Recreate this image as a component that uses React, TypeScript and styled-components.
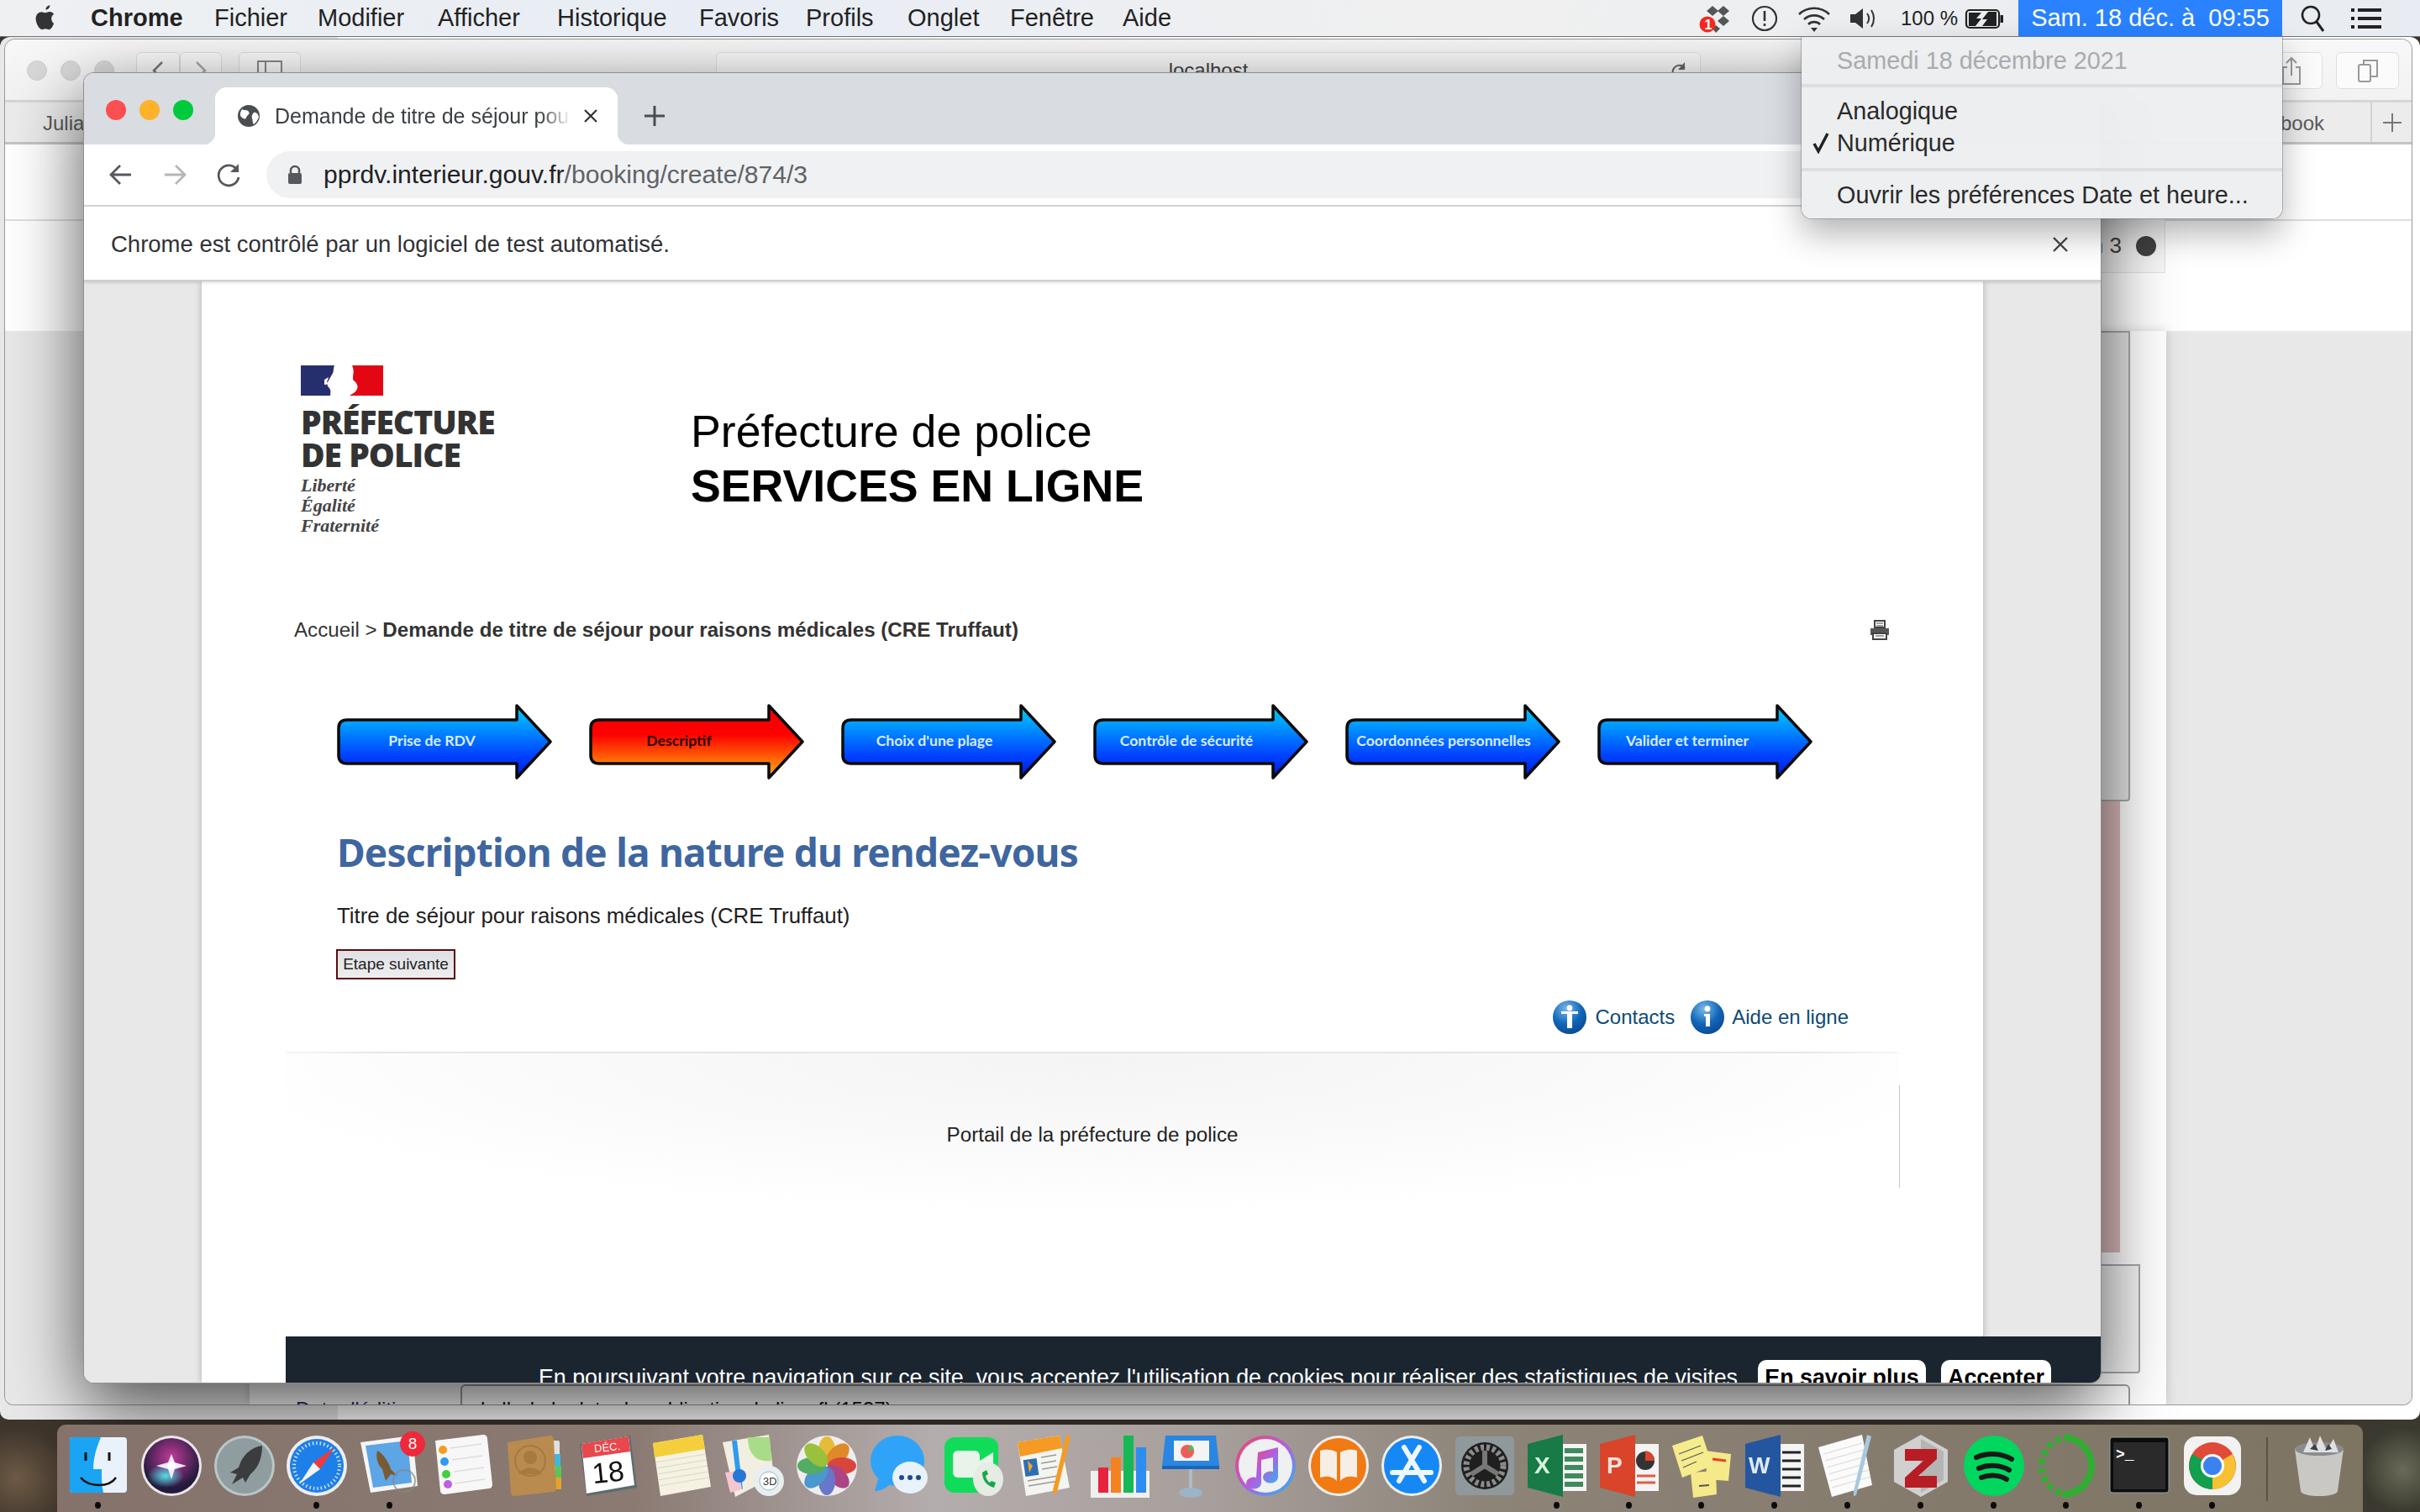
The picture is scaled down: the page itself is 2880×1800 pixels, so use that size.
import React from 'react';
import styled, { createGlobalStyle } from 'styled-components';

const Global = createGlobalStyle`
  html, body { margin: 0; padding: 0; background: #2c2a26; }
  * { box-sizing: border-box; }
  body { font-family: "Liberation Sans", Arial, sans-serif; }
`;

const Screen = styled.div`
  position: relative; width: 2880px; height: 1800px; overflow: hidden;
  background:
    radial-gradient(circle at 20px 1760px, #6e5a45 0, #3f362c 60px, transparent 90px),
    radial-gradient(circle at 2860px 1750px, #6a6a58 0, #3b3a30 50px, transparent 90px),
    #3a352c;
`;

/* ---------- menu bar ---------- */
const MenuBar = styled.header`
  position: relative; z-index: 5; height: 44px; display: flex; align-items: center;
  background: linear-gradient(90deg, #eef0f2, #e8edf5 30%, #f0f0f0 60%, #e8ecf2);
  border-bottom: 1px solid #6f7378; font-size: 29px; color: #222; padding-left: 40px;
`;
const AppleMark = styled.svg` width: 28px; height: 32px; margin-right: 40px; margin-top: -2px; flex: none; `;
const MenuLabel = styled.span<{ $w: number; $bold?: boolean }>`
  width: ${p => p.$w}px; white-space: nowrap; font-weight: ${p => (p.$bold ? 700 : 400)};
`;
const MenuSpacer = styled.div` flex: 1; `;
const StatusIcon = styled.svg<{ $w: number; $gap: number }>`
  width: ${p => p.$w}px; height: 36px; margin-right: ${p => p.$gap}px; flex: none;
`;
const StatusText = styled.span<{ $gap: number }>` font-size: 24px; margin-right: ${p => p.$gap}px; white-space: nowrap; `;
const Clock = styled.div`
  width: 314px; height: 44px; background: #2a82ff; color: #fff; font-size: 29px; white-space: pre; flex: none;
  display: flex; align-items: center; justify-content: center; margin-right: 21px;
`;

/* ---------- drop-down ---------- */
const DropMenu = styled.div`
  position: absolute; z-index: 6; left: 2144px; top: 44px; width: 572px; height: 216px;
  background: rgba(236,238,241,.97); border-radius: 0 0 12px 12px;
  box-shadow: 0 0 0 1px rgba(120,120,120,.5), 0 18px 40px rgba(0,0,0,.3);
  display: flex; flex-direction: column; font-size: 28.8px; color: #2a2a2a; padding-left: 42px;
`;
const DropItem = styled.div<{ $off?: boolean; $h: number }>`
  height: ${p => p.$h}px; line-height: ${p => p.$h}px; position: relative; white-space: nowrap;
  color: ${p => (p.$off ? '#a9abae' : '#2a2a2a')};
`;
const DropGroup = styled.div` padding: 9px 0 11px; `;
const DropRule = styled.div` height: 4px; background: #dcdee1; margin-left: -42px; flex: none; `;
const Check = styled.svg` position: absolute; left: -30px; top: 6px; width: 22px; height: 26px; `;

/* ---------- windows behind ---------- */
const OuterWindow = styled.section`
  position: absolute; left: 0; top: 44px; width: 2880px; height: 1646px; border-radius: 12px 12px 10px 10px; overflow: hidden;
  background: linear-gradient(90deg, #e8e8e8 402px, #fff 402px);
`;
const BackWindow = styled.section`
  position: absolute; left: 6px; top: 3px; width: 2864px; height: 1625px;
  border-radius: 12px 12px 10px 10px; overflow: hidden; background: #f6f6f6;
  display: flex; flex-direction: column; box-shadow: 0 0 0 1px #9a9a9a;
`;
const BackTitle = styled.div`
  height: 75px; flex: none; display: flex; align-items: center; padding: 2px 16px 0 26px;
  background: linear-gradient(#f8f8f8, #f2f2f2); border-bottom: 3px solid #d6d6d6; gap: 16px;
`;
const GhostDot = styled.i` width: 24px; height: 24px; border-radius: 50%; background: #d8d8d8; border: 1px solid #cfcfcf; flex: none; `;
const GhostBtn = styled.div<{ $w: number; $ml?: number }>`
  width: ${p => p.$w}px; height: 44px; border: 1px solid #dedede; border-radius: 6px; background: #fbfbfb;
  margin-left: ${p => p.$ml ?? 0}px; display: flex; align-items: center; justify-content: center; flex: none;
`;
const GhostAddress = styled.div`
  flex: none; width: 1172px; height: 44px; margin-left: 478px; border: 1px solid #e2e2e2; border-radius: 6px; background: #fbfbfb;
  display: flex; justify-content: center; align-items: center; font-size: 24px; color: #444; position: relative;
`;
const GhostReload = styled.svg` position: absolute; right: 14px; top: 8px; width: 22px; height: 26px; `;
const BackTabs = styled.div`
  height: 50px; flex: none; display: flex; align-items: center; background: #ececec; border-bottom: 3px solid #c4c4c4;
  font-size: 24px; color: #5a5a5a; padding-left: 45px;
`;
const BackTabEnd = styled.div`
  width: 49px; height: 100%; border-left: 2px solid #d2d2d2; display: flex; align-items: center; justify-content: center;
`;
const BackTabName = styled.span` margin-left: auto; margin-right: 55px; padding-top: 2px; `;
const BackTabFirst = styled.span` padding-top: 2px; `;
const BackWhite = styled.div` height: 222px; flex: none; background: #fff; position: relative; `;
const BackRule = styled.div` height: 2px; margin-top: 89px; background: #dedede; `;
const Pill = styled.div`
  position: absolute; left: 2300px; top: 0; width: 271px; height: 153px; background: #f7f7f7; border: 1px solid #e2e2e2; border-top: 0;
  display: flex; align-items: center; justify-content: flex-end; gap: 17px; padding: 89px 10px 0 0; font-size: 26px; color: #444; white-space: nowrap;
`;
const PillDot = styled.i` width: 24px; height: 24px; border-radius: 50%; background: #444; `;
const BackBody = styled.div` flex: 1; background: #e8e8e8; position: relative; `;
const BackColumn = styled.div`
  position: absolute; left: 291px; right: 292px; top: 0; bottom: 0; background: #fff; box-shadow: 0 0 12px rgba(0,0,0,.16);
`;
const BackCard = styled.div<{ $t: number; $h: number; $r: number; $fill: string }>`
  position: absolute; top: ${p => p.$t}px; height: ${p => p.$h}px; left: 2100px; right: ${p => p.$r}px;
  border: 2px solid #a8a8a8; border-left: 0; border-radius: 0 0 4px 0; background: ${p => p.$fill};
`;
const BackPink = styled.div`
  position: absolute; top: 560px; height: 537px; left: 2100px; right: 347px; background: #ddbabd;
`;
const BackLetter = styled.span<{ $t: number }>`
  position: absolute; left: 2482px; top: ${p => p.$t}px; font-family: "Liberation Serif", serif; font-weight: 700; font-size: 24px; color: #111; line-height: 1;
`;
const BackTick = styled.i` position: absolute; left: 2490px; top: 81px; width: 5px; height: 5px; background: #a01030; `;
const BackLowBox = styled.div`
  position: absolute; left: 542px; right: 335px; top: 1254px; bottom: -4px; border: 2px solid #9c9c9c; border-radius: 6px 6px 0 0;
  padding: 14px 0 0 22px; font-size: 24px; line-height: 28px; color: #111; white-space: nowrap;
`;
const BackLowLabel = styled.span`
  position: absolute; left: 346px; top: 1270px; font-size: 24px; line-height: 28px; color: #22296e; white-space: nowrap;
`;

/* ---------- front (Chrome) window ---------- */
const ChromeWindow = styled.section`
  position: absolute; z-index: 2; left: 100px; top: 87px; width: 2400px; height: 1559px;
  border-radius: 12px; overflow: hidden; display: flex; flex-direction: column; background: #fff;
`;
const ChromeShadow = styled.div`
  position: absolute; z-index: 1; left: 100px; top: 87px; width: 2400px; height: 1559px; border-radius: 12px;
  box-shadow: 0 0 0 1px #8f8f8f, 0 28px 86px rgba(0,0,0,.68);
`;
const TabStrip = styled.div`
  position: relative; height: 85px; flex: none; background: #d9dce1; display: flex; align-items: flex-end; padding-left: 156px;
`;
const Lights = styled.div` position: absolute; left: 26px; top: 32px; display: flex; gap: 16px; `;
const Light = styled.i<{ $c: string }>` width: 24px; height: 24px; border-radius: 50%; background: ${p => p.$c}; `;
const Tab = styled.div`
  width: 479px; height: 68px; background: #fff; border-radius: 14px 14px 0 0; display: flex; align-items: center; padding-left: 26px; position: relative;
  &::before, &::after { content: ''; position: absolute; bottom: 0; width: 14px; height: 14px; }
  &::before { left: -14px; background: radial-gradient(circle at 0 0, transparent 14px, #fff 14.5px); }
  &::after { right: -14px; background: radial-gradient(circle at 100% 0, transparent 14px, #fff 14.5px); }
`;
const TabTitle = styled.span`
  margin-left: 17px; width: 352px; font-size: 25px; color: #3c4043; white-space: nowrap; overflow: hidden;
  -webkit-mask-image: linear-gradient(90deg, #000 90%, transparent);
  mask-image: linear-gradient(90deg, #000 90%, transparent);
`;
const TabClose = styled.svg` width: 18px; height: 18px; margin-left: 15px; `;
const NewTab = styled.svg` width: 26px; height: 26px; margin: 0 0 21px 31px; `;
const Toolbar = styled.div`
  height: 74px; flex: none; display: flex; align-items: center; border-bottom: 2px solid #d9d9d9; padding-left: 28px;
`;
const NavIcon = styled.svg<{ $gap: number }>` width: 32px; height: 32px; margin-right: ${p => p.$gap}px; flex: none; `;
const Omnibox = styled.div`
  margin-left: 29px; flex: 1; margin-right: 20px; height: 56px; background: #f0f1f3; border-radius: 28px; display: flex; align-items: center; padding-left: 25px;
  font-size: 30.1px; color: #5f6368;
`;
const Host = styled.span` color: #202124; margin-left: 25px; `;
const InfoBar = styled.div`
  height: 89px; flex: none; display: flex; align-items: center; justify-content: space-between; padding: 2px 38px 0 32px; font-size: 27.5px; color: #303236;
  border-bottom: 2px solid #cfcfcf; box-shadow: 0 1px 4px rgba(0,0,0,.18); position: relative; z-index: 1; background: #fff;
`;
const InfoClose = styled.svg` width: 20px; height: 20px; `;
const Viewport = styled.div` flex: 1; background: #e8e8e8; position: relative; overflow: hidden; padding-left: 140px; `;
const Page = styled.main`
  position: relative; width: 2120px; height: 100%; background: #fff; box-shadow: 0 0 8px rgba(0,0,0,.25); padding: 100px 0 0 0;
`;

const Header = styled.div` display: flex; height: 220px; `;
const Logo = styled.div` margin-left: 118px; width: 464px; flex: none; `;
const Flag = styled.svg` display: block; width: 98px; height: 36px; margin-bottom: 11px; `;
const LogoName = styled.div`
  font-family: "Open Sans", "Liberation Sans", sans-serif; font-weight: 800; font-size: 39px; line-height: 39px; color: #333; letter-spacing: -1px; white-space: nowrap;
`;
const Motto = styled.div`
  margin-top: 6px; font-family: "Liberation Serif", serif; font-style: italic; font-weight: 700; font-size: 22px; line-height: 24px; color: #444;
`;
const Titles = styled.div` padding-top: 46px; font-size: 53.7px; line-height: 65px; color: #000; white-space: nowrap; `;
const TitleStrong = styled.div` font-weight: 700; `;

const Crumbs = styled.div`
  margin: 79px 0 0 110px; width: 1900px; height: 32px; display: flex; align-items: center; justify-content: space-between; font-size: 24.15px; color: #333; white-space: nowrap;
`;
const Strong = styled.strong` font-weight: 700; `;
const PrintIcon = styled.svg` width: 26px; height: 26px; `;

const Steps = styled.div` margin: 72px 0 0 161px; display: flex; gap: 44px; `;
const Step = styled.div<{ $cx: number; $on?: boolean }>`
  position: relative; width: 256px; height: 90px; flex: none;
  span {
    position: absolute; left: ${p => p.$cx}px; top: 34px; transform: translateX(-50%); white-space: nowrap;
    font-family: "Lato", sans-serif; font-weight: 700; font-size: 17.6px; line-height: 20px; color: ${p => (p.$on ? '#2a0500' : '#d8ecff')};
  }
  svg { position: absolute; inset: 0; width: 100%; height: 100%; }
`;

const Heading = styled.h1`
  margin: 54px 0 0 161px; font-family: "Noto Sans", sans-serif; font-weight: 700; font-size: 46px; letter-spacing: -.8px; line-height: 64px; color: #3f66a0; white-space: nowrap;
`;
const Lead = styled.p` margin: 28px 0 0 161px; font-size: 25.85px; line-height: 32px; color: #1e1e1e; white-space: nowrap; `;
const NextButton = styled.button`
  display: block; margin: 24px 0 0 160px; width: 142px; height: 36px; padding: 0; border: 2.500px solid #5a0d10; background: linear-gradient(#dfe0e3, #eeeeef);
  font-family: "Liberation Sans", sans-serif; font-size: 19px; color: #222;
`;
const Links = styled.div`
  margin: 23px 0 0 0; padding-right: 160px; display: flex; justify-content: flex-end; align-items: center; font-size: 24px; color: #0d4a78; height: 44px;
`;
const InfoIcon = styled.svg<{ $mr: number }>` width: 42px; height: 42px; margin-right: ${p => p.$mr}px; flex: none; `;
const LinkText = styled.span<{ $mr?: number }>` margin-right: ${p => p.$mr ?? 0}px; `;
const Footer = styled.div`
  position: relative; margin: 19px 0 0 100px; width: 1920px; height: 240px; padding-top: 81px; text-align: center; font-size: 24.2px; line-height: 32px; color: #222;
  border-top: 2px solid transparent;
  border-image: linear-gradient(90deg, #f6f6f6, #e6e6e6 6%, #e6e6e6 94%, #f6f6f6) 1;
  background: radial-gradient(ellipse 56% 80% at 50% 0, #f4f4f4, #fafafa 60%, #fff 100%);
`;
const FooterRule = styled.div` position: absolute; right: -1px; top: 38px; height: 122px; width: 1px; background: #c8c8c8; `;

const CookieBar = styled.div`
  position: absolute; left: 240px; bottom: 0; width: 2160px; height: 55px; background: #1a2530; color: #fff; overflow: hidden;
`;
const CookieRow = styled.div`
  position: absolute; right: 59px; top: 28px; display: flex; align-items: flex-start; white-space: nowrap; font-size: 26.85px;
`;
const CookieText = styled.span` margin: 6px 24px 0 0; `;
const CookieBtn = styled.span<{ $w: number; $ml?: number }>`
  width: ${p => p.$w}px; margin-left: ${p => p.$ml ?? 0}px; height: 60px; padding-top: 6px; border-radius: 10px; background: #fff; color: #000; font-weight: 700; text-align: center; display: block;
`;

/* ---------- dock ---------- */
const Dock = styled.nav`
  position: absolute; z-index: 3; left: 68px; top: 1696px; width: 2744px; height: 104px; border-radius: 10px 10px 0 0;
  background: linear-gradient(90deg, #85736b, #8a7a72 25%, #b4adad 38%, #a79f9b 50%, #8d8478 62%, #857b6d 80%, #7d7462);
  display: flex; padding: 11px 0 0 5px;
`;
const DockSlot = styled.div<{ $w: number }>`
  position: relative; width: ${p => p.$w}px; flex: none; display: flex; justify-content: center;
  svg { width: 74px; height: 76px; display: block; }
`;
const RunDot = styled.i` position: absolute; left: 50%; margin-left: -4px; top: 81px; width: 7px; height: 8px; background: #0a0a0a; border-radius: 50%; `;
const Badge = styled.b`
  position: absolute; top: -3px; right: 2px; width: 30px; height: 30px; border-radius: 50%; background: #ee2a3a; color: #fff; font-size: 19px; font-weight: 400; text-align: center; line-height: 30px;
`;
const DockDivider = styled.div` width: 2px; height: 76px; background: #5c5442; margin: 4px 24px 0 21px; flex: none; `;

const Ic = {
  finder: <svg viewBox="0 0 74 76"><rect x="3" y="4" width="68" height="66" rx="4" fill="#e9f2fb"/><path d="M7 4h33c-6 14-9 26-9 38h10c0 10 0 20 2 28H7a4 4 0 0 1-4-4V8a4 4 0 0 1 4-4z" fill="#1aa4f4"/><path d="M16 52c10 12 34 12 42 0" fill="none" stroke="#111" strokeWidth="2.5"/><path d="M22 22v10M50 22v10" stroke="#111" strokeWidth="3"/></svg>,
  siri: <svg viewBox="0 0 74 76"><defs><radialGradient id="sg1" cx=".5" cy=".35" r=".55"><stop offset="0" stopColor="#c23a9a"/><stop offset="1" stopColor="#241a3e"/></radialGradient><radialGradient id="sg2" cx=".5" cy=".5" r=".5"><stop offset="0" stopColor="#4fe0e8"/><stop offset="1" stopColor="#4fe0e8" stopOpacity="0"/></radialGradient></defs><circle cx="37" cy="38" r="36" fill="#e8e8e8"/><circle cx="37" cy="38" r="33" fill="url(#sg1)"/><ellipse cx="30" cy="50" rx="22" ry="14" fill="url(#sg2)"/><path d="M37 24l4 10 14 4-14 4-4 12-4-12-14-4 14-4z" fill="#f4eaff"/><circle cx="37" cy="38" r="5" fill="#fff"/></svg>,
  launch: <svg viewBox="0 0 74 76"><circle cx="37" cy="38" r="36" fill="#b9c6c8"/><circle cx="37" cy="38" r="33" fill="#8f9da0"/><path d="M58 14c-14 2-24 12-28 26l-10 6 8 2-6 12 13-8 3 6 6-10c10-8 14-20 14-34z" fill="#3a3c3e"/></svg>,
  safari: <svg viewBox="0 0 74 76"><circle cx="37" cy="38" r="36" fill="#eee"/><circle cx="37" cy="38" r="32" fill="#1f7fe8"/><circle cx="37" cy="38" r="27" fill="none" stroke="#cfe6ff" strokeWidth="4" strokeDasharray="1.5 3"/><path d="M58 16L33 34l8 8z" fill="#f03a3a"/><path d="M16 60l17-26 8 8z" fill="#f4f4f4"/></svg>,
  mail: <svg viewBox="0 0 74 76"><path d="M2 10L64 2l6 60-56 8z" fill="#f5f5f5"/><path d="M8 14L58 8l5 50-46 6z" fill="#5da5e4"/><path d="M22 20c6 2 14 14 16 22l8 8-8-2-6 8-4-14c-6-6-8-14-6-22z" fill="#7a5a34"/><circle cx="54" cy="56" r="13" fill="none" stroke="#888" strokeWidth="2" opacity=".7"/></svg>,
  reminders: <svg viewBox="0 0 74 76"><path d="M3 8L60 1c3 0 5 2 5 5l6 54c0 3-2 5-4 5L14 72c-3 0-5-2-5-4z" fill="#f7f7f7"/><circle cx="12" cy="19" r="5" fill="#f59a23"/><circle cx="14" cy="33" r="5" fill="#2e9bf0"/><circle cx="16" cy="48" r="5" fill="#3fd13f"/><circle cx="18" cy="60" r="5" fill="#bd5fe0"/><path d="M20 17l38-5M23 31l36-5M25 45l36-5M26 59l36-5" stroke="#ddd" strokeWidth="1.5"/></svg>,
  contacts: <svg viewBox="0 0 74 76"><rect x="55" y="8" width="10" height="58" rx="2" fill="#e0e0e0"/><rect x="59" y="24" width="7" height="14" fill="#3eb8e0"/><rect x="60" y="38" width="7" height="14" fill="#58c65a"/><rect x="60" y="52" width="7" height="14" fill="#e6a32a"/><path d="M3 10l50-8c3 0 5 2 5 5l3 58c0 2-2 4-4 4l-46 5c-3 0-4-2-4-4z" fill="#b98b4e"/><circle cx="30" cy="32" r="18" fill="none" stroke="#a67a40" strokeWidth="2"/><circle cx="30" cy="28" r="8" fill="#a67a40"/><path d="M16 48c4-10 24-10 28 0z" fill="#a67a40"/></svg>,
  calendar: <svg viewBox="0 0 74 76"><path d="M2 12L62 2l8 62-60 10z" fill="#5c6b70"/><path d="M4 12L60 3l7 58-57 10z" fill="#fff"/><path d="M4 12L60 3l2 18-56 8z" fill="#e8474c"/><text x="19" y="21" fontSize="13" fill="#fff" transform="rotate(-6 30 16)" fontFamily="Liberation Sans">DÉC.</text><text x="17" y="58" fontSize="34" fill="#111" transform="rotate(-6 30 48)" fontFamily="Liberation Sans">18</text></svg>,
  notes: <svg viewBox="0 0 74 76"><path d="M3 11L62 1l10 62-60 11z" fill="#f6f2e2"/><path d="M3 11L62 1l3 17-60 10z" fill="#f5cf3b"/><path d="M6 34l60-10M7 41l60-10M8 48l60-10M9 55l60-10M10 62l60-10" stroke="#d9d6ca" strokeWidth="1.2"/></svg>,
  maps: <svg viewBox="0 0 74 76"><path d="M0 10L55 1l6 50-46 24z" fill="#f2eee2"/><path d="M30 4c0 20 10 30 28 28l-2-28z" fill="#a8dc88"/><path d="M14 8l7 58" stroke="#2e9bf0" strokeWidth="6"/><path d="M3 46l16-2 4 22-14 4z" fill="#f6c6d0"/><circle cx="55" cy="56" r="18" fill="#e7eff0"/><circle cx="55" cy="56" r="11" fill="#fff" stroke="#9db4c4"/><text x="48" y="61" fontSize="13" fill="#333" fontFamily="Liberation Sans">3D</text><circle cx="20" cy="50" r="8" fill="#2777d6"/></svg>,
  photos: <svg viewBox="0 0 74 76"><circle cx="37" cy="38" r="36" fill="#eee"/><g style={{ mixBlendMode: 'multiply' }}>{['#f7c93e','#f0932b','#ea4a3f','#b94a8e','#6f7fd8','#4fa3dc','#59b96a','#a5cf3f'].map((c, i) => <ellipse key={c} cx="37" cy="20" rx="10" ry="17" fill={c} transform={`rotate(${i * 45} 37 38)`}/>)}</g></svg>,
  messages: <svg viewBox="0 0 74 76"><ellipse cx="33" cy="32" rx="32" ry="30" fill="#2ea3f8"/><path d="M10 54L6 68c8 0 14-4 18-8z" fill="#2ea3f8"/><ellipse cx="48" cy="52" rx="21" ry="19" fill="#e8f2fb"/><circle cx="38" cy="52" r="3" fill="#1d4d8d"/><circle cx="48" cy="52" r="3" fill="#1d4d8d"/><circle cx="58" cy="52" r="3" fill="#1d4d8d"/></svg>,
  facetime: <svg viewBox="0 0 74 76"><rect x="2" y="4" width="64" height="66" rx="12" fill="#10dc5a"/><rect x="12" y="20" width="32" height="32" rx="6" fill="#e8f4ea"/><path d="M44 32l16-10v28l-16-10z" fill="#e8f4ea"/><ellipse cx="54" cy="54" rx="18" ry="20" fill="#e6ebe4"/><path d="M47 46c0 10 6 16 14 18l2-6-5-2-2 2c-3-2-4-4-5-8l3-2-2-5z" fill="#16a84a"/></svg>,
  pages: <svg viewBox="0 0 74 76"><path d="M2 10L52 2l12 62-52 10z" fill="#f5f5f0"/><path d="M2 10L52 2l3 15L5 27z" fill="#f59a23"/><rect x="10" y="30" width="16" height="20" fill="#2d6eb5" transform="rotate(-8 18 40)"/><path d="M14 32l6 6-4 8z" fill="#f5a623"/><path d="M30 28l18-3M30 35l18-3M31 42l18-3M14 56l36-6M15 62l36-6" stroke="#999" strokeWidth="1.4"/><path d="M60 1l5 2-16 66-4 4-1-6z" fill="#f59a23"/></svg>,
  numbers: <svg viewBox="0 0 74 76"><rect x="2" y="44" width="70" height="32" fill="#f0f0f0"/><rect x="11" y="40" width="12" height="30" fill="#e8233f"/><rect x="26" y="28" width="12" height="42" fill="#f58220"/><rect x="41" y="2" width="12" height="68" fill="#16b856"/><rect x="56" y="16" width="12" height="54" fill="#2e8df0"/></svg>,
  keynote: <svg viewBox="0 0 74 76"><path d="M4 2h60l4 36H0z" fill="#2a86e0"/><rect x="14" y="8" width="42" height="24" fill="#f4f4f4"/><circle cx="30" cy="21" r="8" fill="#ef5c5c"/><path d="M30 21l8-2a8 8 0 0 0-4-6z" fill="#5ab85a"/><rect x="0" y="38" width="68" height="4" fill="#1a66b8"/><rect x="32" y="42" width="4" height="26" fill="#b0bcc6"/><ellipse cx="34" cy="70" rx="14" ry="6" fill="#9bb4c8"/></svg>,
  music: <svg viewBox="0 0 74 76"><defs><linearGradient id="mg" x1="0" y1="0" x2="1" y2="1"><stop offset="0" stopColor="#f0475c"/><stop offset=".5" stopColor="#b45ce0"/><stop offset="1" stopColor="#1fbef0"/></linearGradient></defs><circle cx="37" cy="38" r="36" fill="url(#mg)"/><circle cx="37" cy="38" r="32" fill="#eef0f2"/><path d="M28 22l24-6v36a9 7 0 1 1-6-7V28l-14 3v28a9 7 0 1 1-6-7z" fill="url(#mg)"/></svg>,
  books: <svg viewBox="0 0 74 76"><circle cx="37" cy="38" r="36" fill="#eee"/><circle cx="37" cy="38" r="33" fill="#f27a13"/><path d="M35 22c-6-4-14-4-20-2v32c8-2 14-2 20 4zM39 22c6-4 14-4 20-2v32c-8-2-14-2-20 4z" fill="#f7efe6"/></svg>,
  appstore: <svg viewBox="0 0 74 76"><circle cx="37" cy="38" r="36" fill="#eee"/><circle cx="37" cy="38" r="33" fill="#1588f5"/><path d="M28 16l24 40M46 16L22 56M14 46h46" stroke="#eef6ff" strokeWidth="6" strokeLinecap="round"/></svg>,
  prefs: <svg viewBox="0 0 74 76"><rect x="2" y="3" width="70" height="70" rx="5" fill="#8f999c"/><circle cx="37" cy="38" r="28" fill="#1f1f1f"/><circle cx="37" cy="38" r="22" fill="none" stroke="#8c8c8c" strokeWidth="7" strokeDasharray="4 3"/><path d="M37 38V20M37 38L21 48M37 38l16 10" stroke="#777" strokeWidth="6"/></svg>,
  excel: <svg viewBox="0 0 74 76"><rect x="42" y="12" width="30" height="56" fill="#f4f4f4"/><path d="M46 20h22M46 30h22M46 40h22M46 50h22M46 60h22" stroke="#3f8a5f" strokeWidth="6"/><path d="M2 12L44 1v74L2 64z" fill="#187a46"/><text x="10" y="47" fontSize="28" fontWeight="700" fill="#d8f2e0" fontFamily="Liberation Sans">X</text></svg>,
  ppt: <svg viewBox="0 0 74 76"><rect x="42" y="12" width="30" height="56" fill="#f4f4f4"/><circle cx="56" cy="32" r="11" fill="#333"/><path d="M56 32V20a12 12 0 0 1 11 12z" fill="#d9442b"/><path d="M46 50h22M46 58h22" stroke="#e05a45" strokeWidth="3"/><path d="M2 12L44 1v74L2 64z" fill="#d9442b"/><text x="10" y="47" fontSize="28" fontWeight="700" fill="#fbe3dc" fontFamily="Liberation Sans">P</text></svg>,
  stickies: <svg viewBox="0 0 74 76"><path d="M42 20l30 4-3 32-26-2z" fill="#f5e98a"/><path d="M24 46l30-2 1 28-28 4z" fill="#f5e98a"/><path d="M2 14L38 2l12 36-36 14z" fill="#f6ec8e"/><path d="M10 24l26-10M13 32l26-10M15 40l16-7" stroke="#555" strokeWidth="1.2"/><path d="M50 30l16 2" stroke="#e8402a" strokeWidth="3"/><path d="M34 62l12-1" stroke="#555" strokeWidth="2"/></svg>,
  word: <svg viewBox="0 0 74 76"><rect x="42" y="12" width="30" height="56" fill="#f4f4f4"/><path d="M46 22h22M46 32h22M46 42h22M46 52h22M46 62h22" stroke="#222" strokeWidth="3"/><path d="M2 12L44 1v74L2 64z" fill="#24569f"/><text x="6" y="47" fontSize="27" fontWeight="700" fill="#dfe9f7" fontFamily="Liberation Sans">W</text></svg>,
  textedit: <svg viewBox="0 0 74 76"><path d="M2 16L54 1l12 60-48 14z" fill="#fbfbfb"/><path d="M8 24l46-13M10 32l46-13M12 40l46-13M14 48l46-13M16 56l46-13M18 64l46-13" stroke="#d8d8d8" strokeWidth="1.2"/><path d="M60 1l5 2-18 70-3 1 0-6z" fill="#a8c8e0"/></svg>,
  zotero: <svg viewBox="0 0 74 76"><path d="M37 1l32 18v38L37 75 5 57V19z" fill="#d0d0d0"/><path d="M37 6l27 15v34L37 70z" fill="#b5b5b5"/><path d="M18 18h38v12L34 50h22v14H18V52l22-20H18z" fill="#b81d25"/></svg>,
  spotify: <svg viewBox="0 0 74 76"><ellipse cx="37" cy="38" rx="36" ry="36" fill="#01d65f"/><path d="M16 28c14-6 30-5 42 2M19 41c12-5 26-4 36 2M22 52c10-4 22-3 30 2" fill="none" stroke="#181818" strokeWidth="6" strokeLinecap="round"/></svg>,
  ring: <svg viewBox="0 0 74 76"><path d="M34 4a34 34 0 1 1-2 68" fill="none" stroke="#2fae32" strokeWidth="8"/><path d="M30 6A34 34 0 0 0 30 70" fill="none" stroke="#2fae32" strokeWidth="8" strokeDasharray="6 5"/></svg>,
  terminal: <svg viewBox="0 0 74 76"><rect x="2" y="4" width="70" height="66" rx="3" fill="#0c0c0c" stroke="#8fa3a6" strokeWidth="1"/><rect x="6" y="10" width="62" height="56" fill="#2a2a2a"/><text x="9" y="30" fontSize="18" fontWeight="700" fill="#fff" fontFamily="Liberation Mono">&gt;_</text></svg>,
  chrome: <svg viewBox="0 0 74 76"><rect x="3" y="3" width="68" height="70" rx="15" fill="#f2f2f2"/><circle cx="37" cy="38" r="28" fill="#e04a3a"/><path d="M37 38L13 24a28 28 0 0 0 24 42z" fill="#11a04d"/><path d="M37 38l24-14a28 28 0 0 1-24 42z" fill="#f8c133"/><circle cx="37" cy="38" r="14" fill="#fff"/><circle cx="37" cy="38" r="11" fill="#3b82ef"/></svg>,
  trash: <svg viewBox="0 0 74 76"><path d="M8 18c0-6 58-6 58 0l-7 50c-1 8-43 8-44 0z" fill="#d6d7d6" opacity=".85"/><ellipse cx="37" cy="18" rx="29" ry="8" fill="#8b8b90"/><path d="M18 22l8-18 6 16 6-18 8 18 8-14 6 16z" fill="#dfe0e4"/><path d="M26 18l6-6 4 8zM44 20l4-8 4 6z" fill="#3d3d40"/></svg>,
};

const dock: { k: keyof typeof Ic; run?: boolean; badge?: string; w: number }[] = [
  { k: 'finder', run: true, w: 88 }, { k: 'siri', w: 86 }, { k: 'launch', w: 87 }, { k: 'safari', run: true, w: 86 },
  { k: 'mail', run: true, badge: '8', w: 88 }, { k: 'reminders', w: 87 }, { k: 'contacts', w: 86 }, { k: 'calendar', w: 87 },
  { k: 'notes', w: 85 }, { k: 'maps', w: 87 }, { k: 'photos', w: 88 }, { k: 'messages', w: 87 }, { k: 'facetime', w: 87 },
  { k: 'pages', w: 87 }, { k: 'numbers', w: 87 }, { k: 'keynote', w: 87 }, { k: 'music', w: 86 }, { k: 'books', w: 87 },
  { k: 'appstore', w: 87 }, { k: 'prefs', w: 87 }, { k: 'excel', run: true, w: 86 }, { k: 'ppt', run: true, w: 85 },
  { k: 'stickies', run: true, w: 87 }, { k: 'word', run: true, w: 87 }, { k: 'textedit', run: true, w: 87 }, { k: 'zotero', run: true, w: 87 },
  { k: 'spotify', run: true, w: 87 }, { k: 'ring', run: true, w: 86 }, { k: 'terminal', run: true, w: 87 }, { k: 'chrome', run: true, w: 87 },
];

const steps = [
  { t: 'Prise de RDV', cx: 113 }, { t: 'Descriptif', cx: 107, on: true }, { t: "Choix d'une plage", cx: 111 },
  { t: 'Contrôle de sécurité', cx: 111 }, { t: 'Coordonnées personnelles', cx: 117 }, { t: 'Valider et terminer', cx: 107 },
];

const ArrowShape = ({ id, on }: { id: string; on?: boolean }) => (
  <svg viewBox="0 0 256 90">
    <defs>
      <linearGradient id={id} x1="0" y1="0" x2="0" y2="1">
        {on ? <><stop offset="0" stopColor="#f00000"/><stop offset=".4" stopColor="#ff0000"/><stop offset=".75" stopColor="#ff6a06"/><stop offset="1" stopColor="#f9b020"/></>
            : <><stop offset="0" stopColor="#00d0e0"/><stop offset=".22" stopColor="#00a4ff"/><stop offset=".7" stopColor="#0040ff"/><stop offset="1" stopColor="#0018d8"/></>}
      </linearGradient>
    </defs>
    <path d="M12 19H214V2L254 45 214 88V71H12Q2 71 2 61V29Q2 19 12 19Z" fill={`url(#${id})`} stroke="#0a0a0a" strokeWidth="3.5" strokeLinejoin="round"/>
  </svg>
);

const InfoDisc = ({ id, mr, t }: { id: string; mr: number; t?: boolean }) => (
  <InfoIcon $mr={mr} viewBox="0 0 42 42">
    <defs><radialGradient id={id} cx=".4" cy=".25" r=".9"><stop offset="0" stopColor="#7ab8ea"/><stop offset=".5" stopColor="#1166b8"/><stop offset="1" stopColor="#0a3f86"/></radialGradient></defs>
    <circle cx="21" cy="21" r="20" fill={`url(#${id})`}/>
    {t ? <><circle cx="21" cy="10" r="3.4" fill="#fff"/><path d="M11 14h20v3h-7v17h-6V17h-7z" fill="#fff"/></>
       : <><circle cx="21" cy="11" r="3.4" fill="#fff"/><path d="M17 17h7v15h-5V20h-2z" fill="#fff"/></>}
  </InfoIcon>
);

export default function App() {
  return (
    <Screen>
      <Global />
      <MenuBar>
        <AppleMark viewBox="0 0 24 28"><path fill="#333" d="M16.7 1c.2 2-1.9 4.8-4.3 4.6-.3-2.200 2.100-4.500 4.300-4.600zM20.900 20.100c-1 2.300-3 6.400-5.300 6.400-1.300 0-1.900-.8-3.500-.8s-2.300.8-3.500.8C6 26.500 2 20.500 2 15.200 2 10.500 5.100 8 8 8c1.600 0 2.900 1 3.900 1S14.400 7.900 16.300 7.900c1 0 3.300.3 4.500 2.300-3.600 2.300-3 7.700.1 9.900z"/></AppleMark>
        <MenuLabel $bold $w={147}>Chrome</MenuLabel>
        <MenuLabel $w={123}>Fichier</MenuLabel>
        <MenuLabel $w={143}>Modifier</MenuLabel>
        <MenuLabel $w={142}>Afficher</MenuLabel>
        <MenuLabel $w={169}>Historique</MenuLabel>
        <MenuLabel $w={127}>Favoris</MenuLabel>
        <MenuLabel $w={121}>Profils</MenuLabel>
        <MenuLabel $w={122}>Onglet</MenuLabel>
        <MenuLabel $w={134}>Fenêtre</MenuLabel>
        <MenuLabel $w={70}>Aide</MenuLabel>
        <MenuSpacer />
        <StatusIcon $w={40} $gap={22} viewBox="0 0 40 36">
          <path d="M16 3l7 6-7 6-7-6zM29 3l7 6-7 6-7-6zM29 15l7 6-7 6-7-6zM20 26l5 4-5 5-4-5z" fill="#555"/>
          <circle cx="10" cy="25" r="9.500" fill="#f5281f"/><text x="6.500" y="31" fontSize="16" fontWeight="700" fill="#fff" fontFamily="Liberation Sans">1</text>
        </StatusIcon>
        <StatusIcon $w={32} $gap={22} viewBox="0 0 32 36">
          <circle cx="16" cy="18" r="14" fill="none" stroke="#333" strokeWidth="2.200"/><path d="M16 9v12M16 24v3" stroke="#333" strokeWidth="2.600"/>
        </StatusIcon>
        <StatusIcon $w={42} $gap={20} viewBox="0 0 42 36">
          <path d="M3 13a26 26 0 0 1 36 0M9 19a18 18 0 0 1 24 0M14 25a10 10 0 0 1 14 0" fill="none" stroke="#333" strokeWidth="2.600"/><path d="M21 34l-4-5h8z" fill="#333"/>
        </StatusIcon>
        <StatusIcon $w={36} $gap={26} viewBox="0 0 36 36">
          <path d="M2 13h6l9-7v24l-9-7H2z" fill="#333"/><path d="M22 12c3 4 3 8 0 12M27 8c4 6 4 14 0 20" fill="none" stroke="#333" strokeWidth="2"/>
        </StatusIcon>
        <StatusText $gap={8}>100 %</StatusText>
        <StatusIcon $w={48} $gap={16} viewBox="0 0 46 36">
          <rect x="1" y="8" width="39" height="21" rx="4" fill="none" stroke="#222" strokeWidth="2.200"/><rect x="41.500" y="14" width="3.500" height="9" fill="#222"/>
          <path d="M4 11h15l-6 7h6L12 27H4zM27 10h10v17H20l6-8h-6z" fill="#222"/>
        </StatusIcon>
        <Clock>Sam. 18 déc. à  09:55</Clock>
        <StatusIcon $w={30} $gap={30} viewBox="0 0 30 36">
          <circle cx="13" cy="14" r="10" fill="none" stroke="#222" strokeWidth="2.600"/><path d="M20 22l8 11" stroke="#222" strokeWidth="3"/>
        </StatusIcon>
        <StatusIcon $w={38} $gap={45} viewBox="0 0 38 36">
          <path d="M9 8h28M9 18h28M9 28h28" stroke="#222" strokeWidth="4"/><path d="M1 8h4M1 18h4M1 28h4" stroke="#222" strokeWidth="4"/>
        </StatusIcon>
      </MenuBar>

      <DropMenu>
        <DropItem $off $h={56}>Samedi 18 décembre 2021</DropItem>
        <DropRule />
        <DropGroup>
          <DropItem $h={38}>Analogique</DropItem>
          <DropItem $h={38}>
            <Check viewBox="0 0 22 26"><path d="M3 14l5 9L19 2" fill="none" stroke="#222" strokeWidth="3.500"/></Check>
            Numérique
          </DropItem>
        </DropGroup>
        <DropRule />
        <DropItem $h={56}>Ouvrir les préférences Date et heure...</DropItem>
      </DropMenu>

      <OuterWindow>
        <BackWindow>
          <BackTitle>
            <GhostDot /><GhostDot /><GhostDot />
            <GhostBtn $w={52} $ml={10}><svg width="16" height="26" viewBox="0 0 16 26"><path d="M13 3L3 13l10 10" fill="none" stroke="#777" strokeWidth="2.500"/></svg></GhostBtn>
            <GhostBtn $w={50} $ml={-16}><svg width="16" height="26" viewBox="0 0 16 26"><path d="M3 3l10 10L3 23" fill="none" stroke="#aaa" strokeWidth="2.500"/></svg></GhostBtn>
            <GhostBtn $w={74} $ml={4}><svg width="30" height="26" viewBox="0 0 30 26"><rect x="1" y="2" width="28" height="22" fill="none" stroke="#888" strokeWidth="2"/><path d="M10 2v22" stroke="#888" strokeWidth="2"/></svg></GhostBtn>
            <GhostAddress>
              localhost
              <GhostReload viewBox="0 0 22 26"><path d="M18 10a8 8 0 1 0 1 8" fill="none" stroke="#666" strokeWidth="2"/><path d="M18 3v9h-8z" fill="#666"/></GhostReload>
            </GhostAddress>
            <GhostBtn $w={74} $ml={650}><svg width="26" height="36" viewBox="0 0 26 36"><path d="M8 14H3v20h20V14h-5M13 24V3M7 9l6-6 6 6" fill="none" stroke="#999" strokeWidth="2"/></svg></GhostBtn>
            <GhostBtn $w={75}><svg width="26" height="30" viewBox="0 0 26 30"><rect x="2" y="8" width="14" height="20" rx="2" fill="none" stroke="#999" strokeWidth="2"/><path d="M8 8V3h16v19h-8" fill="none" stroke="#999" strokeWidth="2"/></svg></GhostBtn>
          </BackTitle>
          <BackTabs>
            <BackTabFirst>Julia</BackTabFirst>
            <BackTabName>book</BackTabName>
            <BackTabEnd>
              <svg width="24" height="24" viewBox="0 0 24 24"><path d="M12 1v22M1 12h22" stroke="#777" strokeWidth="2"/></svg>
            </BackTabEnd>
          </BackTabs>
          <BackWhite>
            <BackRule />
            <Pill>n 3<PillDot /></Pill>
          </BackWhite>
          <BackBody>
            <BackColumn />
            <BackCard $t={0} $h={560} $r={335} $fill="#e6e6e6" />
            <BackTick />
            <BackPink />
            <BackLetter $t={581}>r</BackLetter>
            {[683, 751, 819, 886, 954, 1022].map(t => <BackLetter key={t} $t={t}>a</BackLetter>)}
            <BackCard $t={1111} $h={130} $r={323} $fill="#f4f4f4" />
            <BackLowLabel>Date d'édition</BackLowLabel>
            <BackLowBox>le lh de la date de publication du livre fl (1537)</BackLowBox>
          </BackBody>
        </BackWindow>
      </OuterWindow>

      <ChromeShadow />
      <ChromeWindow>
        <TabStrip>
          <Lights><Light $c="#fc4f52"/><Light $c="#fdb22a"/><Light $c="#00ca3c"/></Lights>
          <Tab>
            <svg width="28" height="28" viewBox="0 0 28 28"><circle cx="14" cy="14" r="13" fill="#4a4d52"/><path d="M6 6c3 2 6 0 8 3s-2 4-3 7-4 1-6-1-1-6 1-9zM20 10c3-1 5 2 6 5-1 3-3 7-6 9-2-3-1-5-2-7s0-5 2-7z" fill="#fff"/></svg>
            <TabTitle>Demande de titre de séjour pour raisons</TabTitle>
            <TabClose viewBox="0 0 18 18"><path d="M2 2l14 14M16 2L2 16" stroke="#333" strokeWidth="2.200"/></TabClose>
          </Tab>
          <NewTab viewBox="0 0 26 26"><path d="M13 1v24M1 13h24" stroke="#4a4d52" strokeWidth="3"/></NewTab>
        </TabStrip>
        <Toolbar>
          <NavIcon $gap={32} viewBox="0 0 32 32"><path d="M28 16H5M15 5L4 16l11 11" fill="none" stroke="#55585c" strokeWidth="2.800"/></NavIcon>
          <NavIcon $gap={32} viewBox="0 0 32 32"><path d="M4 16h23M17 5l11 11-11 11" fill="none" stroke="#b4b7ba" strokeWidth="2.800"/></NavIcon>
          <NavIcon $gap={0} viewBox="0 0 32 32"><path d="M26 10a12 12 0 1 0 2 9" fill="none" stroke="#55585c" strokeWidth="2.800"/><path d="M28 3v10H18z" fill="#55585c"/></NavIcon>
          <Omnibox>
            <svg width="18" height="24" viewBox="0 0 18 24"><path d="M4 10V7a5 5 0 0 1 10 0v3" fill="none" stroke="#55585c" strokeWidth="2.500"/><rect x="1" y="10" width="16" height="13" rx="2" fill="#55585c"/></svg>
            <Host>pprdv.interieur.gouv.fr</Host>/booking/create/874/3
          </Omnibox>
        </Toolbar>
        <InfoBar>
          Chrome est contrôlé par un logiciel de test automatisé.
          <InfoClose viewBox="0 0 20 20"><path d="M2 2l16 16M18 2L2 18" stroke="#444" strokeWidth="2.400"/></InfoClose>
        </InfoBar>
        <Viewport>
          <Page>
            <Header>
              <Logo>
                <Flag viewBox="0 0 98 36">
                  <path d="M0 0h40c-2 5 0 7-3 11-2 3-2 4-4 7s-2 6 0 8 3 3 2 10H0z" fill="#262f6e"/>
                  <path d="M61 0h37v36H58c2-2 6-3 8-6s2-6 0-9-4-2-4-6 2-9-1-15z" fill="#e30613"/>
                  <path d="M28 17l5-3-2 6 3 2-6 1z" fill="#fff"/>
                </Flag>
                <LogoName>PRÉFECTURE<br />DE POLICE</LogoName>
                <Motto>Liberté<br />Égalité<br />Fraternité</Motto>
              </Logo>
              <Titles>Préfecture de police<TitleStrong>SERVICES EN LIGNE</TitleStrong></Titles>
            </Header>
            <Crumbs>
              <span>Accueil &gt; <Strong>Demande de titre de séjour pour raisons médicales (CRE Truffaut)</Strong></span>
              <PrintIcon viewBox="0 0 26 26"><path d="M7 2h12v8H7z" fill="#fff" stroke="#444" strokeWidth="2"/><path d="M9 5h8M9 8h8" stroke="#444"/><path d="M2 11h22v8H2z" fill="#555"/><path d="M5 17h16v7H5z" fill="#fff" stroke="#444" strokeWidth="2"/><path d="M8 20h10" stroke="#444"/></PrintIcon>
            </Crumbs>
            <Steps>
              {steps.map((s, i) => (
                <Step key={s.t} $cx={s.cx} $on={s.on}>
                  <ArrowShape id={`arrow${i}`} on={s.on} />
                  <span>{s.t}</span>
                </Step>
              ))}
            </Steps>
            <Heading>Description de la nature du rendez-vous</Heading>
            <Lead>Titre de séjour pour raisons médicales (CRE Truffaut)</Lead>
            <NextButton>Etape suivante</NextButton>
            <Links>
              <InfoDisc id="d1" mr={10} t />
              <LinkText $mr={18}>Contacts</LinkText>
              <InfoDisc id="d2" mr={8} />
              <LinkText>Aide en ligne</LinkText>
            </Links>
            <Footer>
              Portail de la préfecture de police
              <FooterRule />
            </Footer>
          </Page>
          <CookieBar>
            <CookieRow>
              <CookieText>En poursuivant votre navigation sur ce site, vous acceptez l'utilisation de cookies pour réaliser des statistiques de visites</CookieText>
              <CookieBtn $w={200}>En savoir plus</CookieBtn>
              <CookieBtn $w={131} $ml={18}>Accepter</CookieBtn>
            </CookieRow>
          </CookieBar>
        </Viewport>
      </ChromeWindow>

      <Dock>
        {dock.map(d => (
          <DockSlot key={d.k} $w={d.w}>
            {Ic[d.k]}
            {d.badge && <Badge>{d.badge}</Badge>}
            {d.run && <RunDot />}
          </DockSlot>
        ))}
        <DockDivider />
        <DockSlot $w={74}>{Ic.trash}</DockSlot>
      </Dock>
    </Screen>
  );
}
